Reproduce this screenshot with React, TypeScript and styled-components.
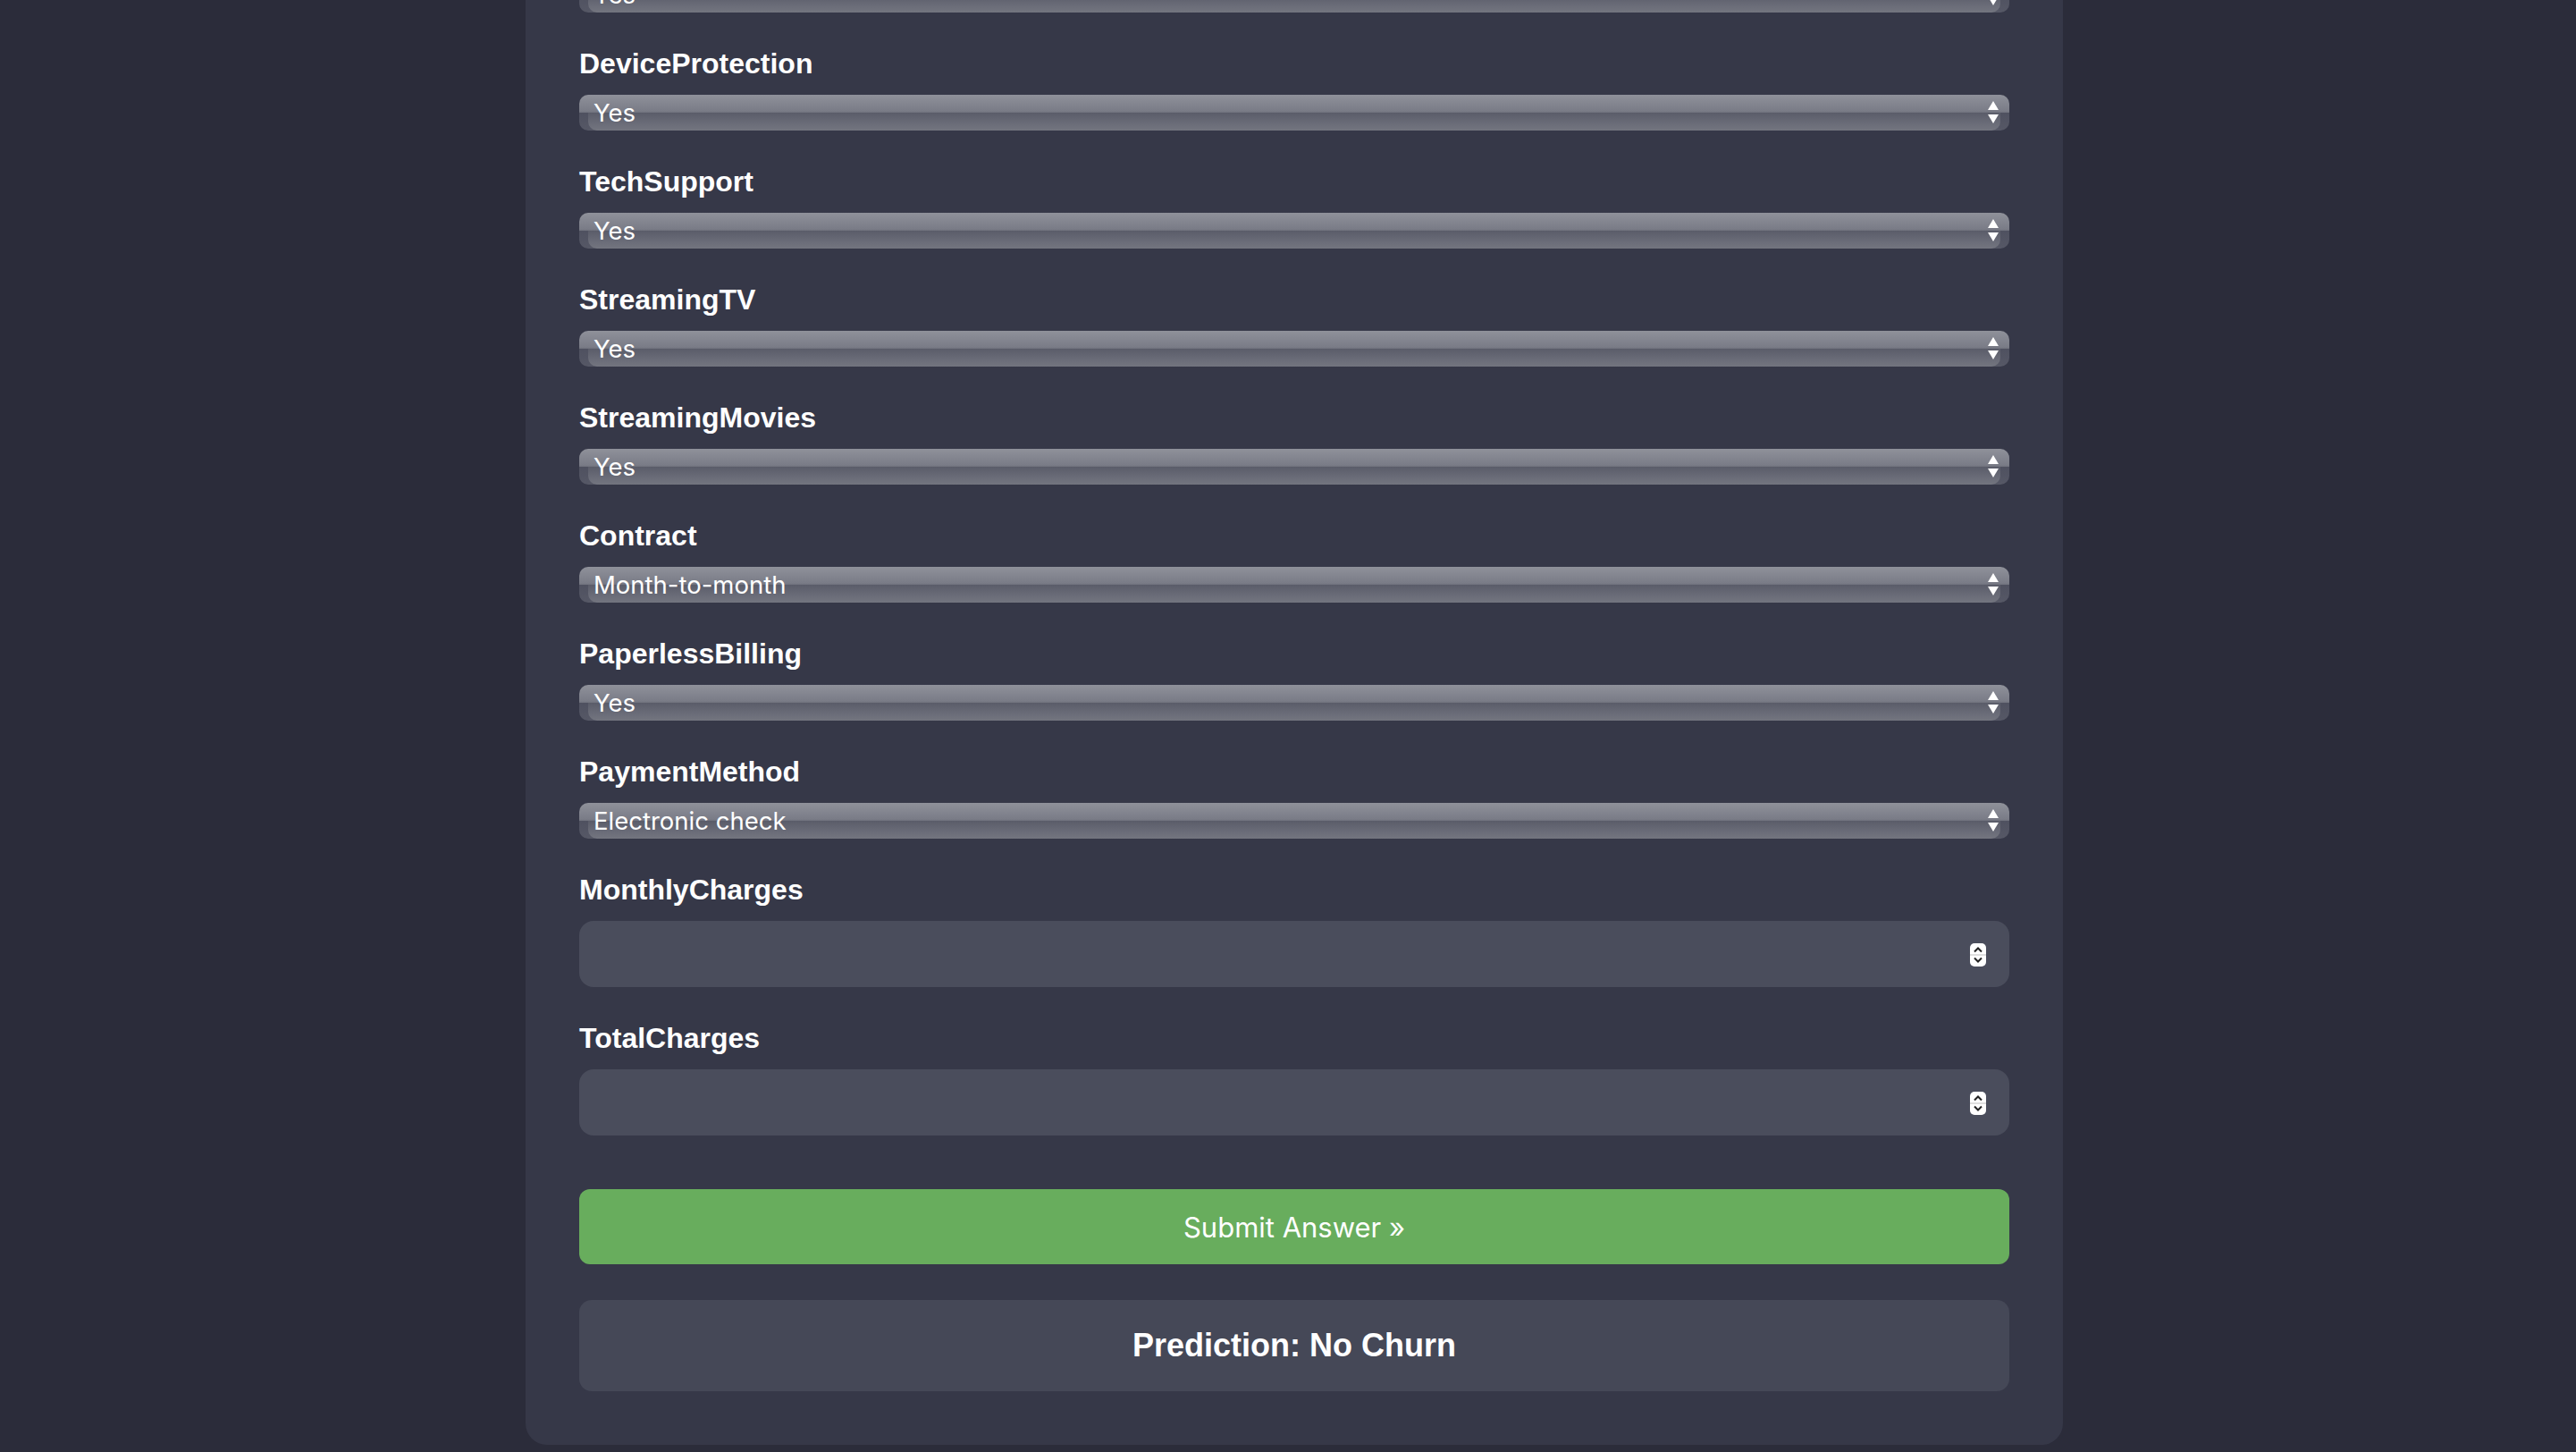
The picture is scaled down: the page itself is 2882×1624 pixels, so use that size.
import React from 'react';
import styled, { createGlobalStyle } from 'styled-components';

const GlobalStyle = createGlobalStyle`
  html, body {
    margin: 0;
    padding: 0;
    background: #2b2c3a;
  }
  body {
    font-family: "Liberation Sans", Arial, sans-serif;
  }
  * { box-sizing: border-box; }
`;

const Page = styled.div`
  height: 1624px;
  overflow: hidden;
  display: flex;
  justify-content: center;
  align-items: flex-start;
  padding-left: 14px;
  background: #2b2c3a;
`;

const Card = styled.form`
  width: 1720px;
  margin-top: -139px;
  padding: 60px;
  background: #363848;
  border-radius: 24px;
  display: flex;
  flex-direction: column;
`;

const Field = styled.div`
  display: flex;
  flex-direction: column;
  margin-bottom: 39px;
`;

const Label = styled.label`
  font-family: "Liberation Sans", Arial, sans-serif;
  font-weight: 700;
  font-size: 32px;
  line-height: 36px;
  color: #ffffff;
  margin-bottom: 17px;
`;

const SelectBox = styled.div`
  position: relative;
  height: 40px;
  border-radius: 10px;
  overflow: hidden;
  background: linear-gradient(
    to bottom,
    #8f919a 0%,
    #7a7c87 45%,
    #6f717c 50%,
    #4f5160 51%,
    #565866 100%
  );

  &::before {
    content: '';
    position: absolute;
    left: 10px;
    right: 10px;
    top: 50%;
    bottom: 0;
    border-radius: 0 0 10px 10px;
    background: linear-gradient(to bottom, #5a5c69 0%, #6a6c78 60%, #73757f 100%);
  }
`;

const Select = styled.select`
  appearance: none;
  -webkit-appearance: none;
  position: relative;
  z-index: 1;
  width: 100%;
  height: 40px;
  margin: 0;
  border: 0;
  background: transparent;
  color: #ffffff;
  font-family: Inter, "Noto Sans", sans-serif;
  font-size: 27.5px;
  line-height: 40px;
  padding: 0 44px 0 16px;
  outline: none;
`;

const Arrows = styled.svg`
  position: absolute;
  z-index: 2;
  right: 12px;
  top: 7px;
  width: 12px;
  height: 26px;
  pointer-events: none;
`;

const NumberBox = styled.div`
  position: relative;
`;

const NumberInput = styled.input`
  width: 100%;
  height: 74px;
  margin: 0;
  border: 0;
  border-radius: 16px;
  background: #4a4d5c;
  color: #ffffff;
  font-family: Inter, "Noto Sans", sans-serif;
  font-size: 28px;
  padding: 0 70px 0 20px;
  outline: none;
  appearance: textfield;
  -moz-appearance: textfield;

  &::-webkit-inner-spin-button,
  &::-webkit-outer-spin-button {
    -webkit-appearance: none;
    margin: 0;
  }
`;

const Spinner = styled.svg`
  position: absolute;
  right: 26px;
  top: 25px;
  width: 18px;
  height: 26px;
  pointer-events: none;
`;

const SubmitButton = styled.button`
  margin-top: 21px;
  height: 84px;
  border: 0;
  border-radius: 12px;
  background: #68ad5d;
  color: #ffffff;
  font-family: Inter, "Noto Sans", sans-serif;
  font-size: 31px;
  cursor: pointer;
`;

const Prediction = styled.div`
  margin-top: 40px;
  height: 102px;
  border-radius: 14px;
  background: #454857;
  display: flex;
  align-items: center;
  justify-content: center;
  color: #ffffff;
  font-family: "Liberation Sans", Arial, sans-serif;
  font-weight: 700;
  font-size: 36px;
`;

type SelectField = { name: string; value: string; options: string[] };

const yesNo = ['Yes', 'No', 'No internet service'];

const selectFields: SelectField[] = [
  { name: 'OnlineBackup', value: 'Yes', options: yesNo },
  { name: 'DeviceProtection', value: 'Yes', options: yesNo },
  { name: 'TechSupport', value: 'Yes', options: yesNo },
  { name: 'StreamingTV', value: 'Yes', options: yesNo },
  { name: 'StreamingMovies', value: 'Yes', options: yesNo },
  { name: 'Contract', value: 'Month-to-month', options: ['Month-to-month', 'One year', 'Two year'] },
  { name: 'PaperlessBilling', value: 'Yes', options: ['Yes', 'No'] },
  {
    name: 'PaymentMethod',
    value: 'Electronic check',
    options: ['Electronic check', 'Mailed check', 'Bank transfer (automatic)', 'Credit card (automatic)'],
  },
];

const numberFields = ['MonthlyCharges', 'TotalCharges'];

const SelectArrows = () => (
  <Arrows viewBox="0 0 12 26">
    <polygon points="0,10 6,0 12,10" fill="#ffffff" />
    <polygon points="0,15 12,15 6,25" fill="#ffffff" />
  </Arrows>
);

const SpinButton = () => (
  <Spinner viewBox="0 0 18 26">
    <rect x="0" y="0" width="18" height="26" rx="5" fill="#ffffff" />
    <line x1="0" y1="13" x2="18" y2="13" stroke="#d4d4d4" strokeWidth="1.5" />
    <polyline points="5,9.5 9,5.5 13,9.5" fill="none" stroke="#222222" strokeWidth="2" />
    <polyline points="5,16.5 9,20.5 13,16.5" fill="none" stroke="#222222" strokeWidth="2" />
  </Spinner>
);

export default function App() {
  return (
    <>
      <GlobalStyle />
      <Page>
        <Card onSubmit={(e) => e.preventDefault()}>
          {selectFields.map((f) => (
            <Field key={f.name}>
              <Label htmlFor={f.name}>{f.name}</Label>
              <SelectBox>
                <Select id={f.name} defaultValue={f.value}>
                  {f.options.map((o) => (
                    <option key={o} value={o}>
                      {o}
                    </option>
                  ))}
                </Select>
                <SelectArrows />
              </SelectBox>
            </Field>
          ))}
          {numberFields.map((n) => (
            <Field key={n}>
              <Label htmlFor={n}>{n}</Label>
              <NumberBox>
                <NumberInput id={n} type="number" step="any" />
                <SpinButton />
              </NumberBox>
            </Field>
          ))}
          <SubmitButton type="submit">Submit Answer »</SubmitButton>
          <Prediction>Prediction: No Churn</Prediction>
        </Card>
      </Page>
    </>
  );
}
